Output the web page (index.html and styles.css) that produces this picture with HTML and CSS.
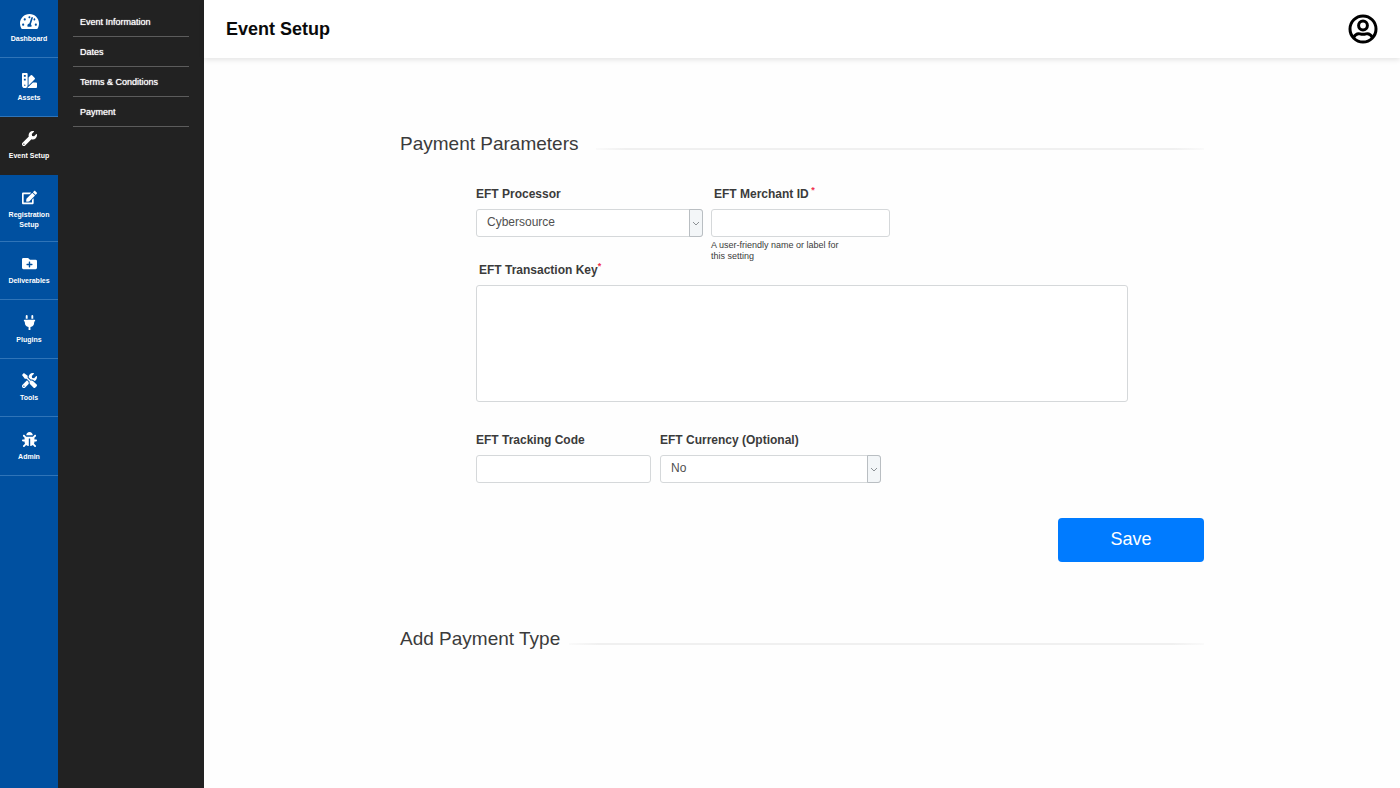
FILE: index.html
```html
<!DOCTYPE html>
<html lang="en">
<head>
    <meta charset="utf-8">
    <title>Event Setup</title>
    <meta name="viewport" content="width=device-width, initial-scale=1.0">
    <link rel="stylesheet" href="styles.css">
</head>
<body>
    <div class="app">
        <!-- Main navigation -->
        <nav class="rail">
            <a class="rail-item" href="#">
                <svg class="icon icon-wide" viewBox="0 32 576 448"><path d="M288 32C128.94 32 0 160.94 0 320c0 52.8 14.25 102.26 39.06 144.8 5.61 9.62 16.3 15.2 27.44 15.2h443c11.14 0 21.83-5.58 27.44-15.2C561.75 422.26 576 372.8 576 320c0-159.06-128.94-288-288-288zm0 64c14.71 0 26.58 10.13 30.32 23.65-1.11 2.26-2.64 4.23-3.45 6.67l-9.22 27.67c-5.13 3.49-10.97 6.01-17.64 6.01-17.67 0-32-14.33-32-32S270.33 96 288 96zM96 384c-17.67 0-32-14.33-32-32s14.33-32 32-32 32 14.33 32 32-14.33 32-32 32zm48-160c-17.67 0-32-14.33-32-32s14.33-32 32-32 32 14.33 32 32-14.33 32-32 32zm246.77-72.41l-61.33 184C343.13 347.33 352 364.54 352 384c0 11.72-3.38 22.55-8.88 32H232.88c-5.5-9.45-8.88-20.28-8.88-32 0-33.94 26.5-61.43 59.9-63.59l61.34-184.01c4.17-12.56 17.73-19.45 30.36-15.17 12.57 4.19 19.35 17.79 15.17 30.36zm14.66 57.2l15.52-46.55c3.47-1.29 7.13-2.23 11.05-2.23 17.67 0 32 14.33 32 32s-14.33 32-32 32c-11.38-.01-20.89-6.28-26.57-15.22zM480 384c-17.67 0-32-14.33-32-32s14.33-32 32-32 32 14.33 32 32-14.33 32-32 32z"/></svg>
                <span>Dashboard</span>
            </a>
            <a class="rail-item" href="#">
                <svg class="icon" viewBox="0 0 512 512"><path d="M434.66 167.71L344.5 77.36a31.83 31.83 0 0 0-45-.07l-.07.07L224 152.88V424l210.66-211.1a32 32 0 0 0 0-45.19zM480 320H373.09L186.68 506.51c-2.06 2.07-4.5 3.58-6.68 5.49h300a32 32 0 0 0 32-32V352a32 32 0 0 0-32-32zM192 32a32 32 0 0 0-32-32H32A32 32 0 0 0 0 32v384a96 96 0 0 0 192 0zM96 440a24 24 0 1 1 24-24 24 24 0 0 1-24 24zm32-184H64v-64h64zm0-128H64V64h64z"/></svg>
                <span>Assets</span>
            </a>
            <a class="rail-item active" href="#">
                <svg class="icon" viewBox="0 0 512 512"><path d="M507.73 109.1c-2.24-9.03-13.54-12.09-20.12-5.51l-74.36 74.36-67.88-11.31-11.31-67.88 74.36-74.36c6.62-6.62 3.43-17.9-5.66-20.16-47.38-11.74-99.55.91-136.58 37.93-39.64 39.64-50.55 97.1-34.05 147.2L18.74 402.76c-24.99 24.99-24.99 65.51 0 90.5 24.99 24.99 65.51 24.99 90.5 0l213.21-213.21c50.12 16.71 107.47 5.68 147.37-34.22 37.07-37.07 49.7-89.32 37.91-136.73zM64 472c-13.25 0-24-10.75-24-24 0-13.26 10.75-24 24-24s24 10.74 24 24c0 13.25-10.75 24-24 24z"/></svg>
                <span>Event Setup</span>
            </a>
            <a class="rail-item" href="#">
                <svg class="icon" viewBox="0 0 576 512"><path d="M402.6 83.2l90.2 90.2c3.8 3.8 3.8 10 0 13.8L274.4 405.6l-92.8 10.3c-12.4 1.4-22.9-9.1-21.5-21.5l10.3-92.8L388.8 83.2c3.8-3.8 10-3.8 13.8 0zm162-22.9l-48.8-48.8c-15.2-15.2-39.9-15.2-55.2 0l-35.4 35.4c-3.8 3.8-3.8 10 0 13.8l90.2 90.2c3.8 3.8 10 3.8 13.8 0l35.4-35.4c15.2-15.3 15.2-40 0-55.2zM384 346.2V448H64V128h229.8c3.2 0 6.2-1.3 8.5-3.5l40-40c7.6-7.6 2.2-20.5-8.5-20.5H48C21.5 64 0 85.5 0 112v352c0 26.5 21.5 48 48 48h352c26.5 0 48-21.5 48-48V306.2c0-10.7-12.9-16-20.5-8.5l-40 40c-2.2 2.3-3.5 5.3-3.5 8.5z"/></svg>
                <span>Registration Setup</span>
            </a>
            <a class="rail-item" href="#">
                <svg class="icon" viewBox="0 0 512 512"><path d="M464 128H272l-64-64H48a48 48 0 0 0-48 48v288a48 48 0 0 0 48 48h416a48 48 0 0 0 48-48V176a48 48 0 0 0-48-48zM359.5 296a16 16 0 0 1-16 16h-64v64a16 16 0 0 1-16 16h-16a16 16 0 0 1-16-16v-64h-64a16 16 0 0 1-16-16v-16a16 16 0 0 1 16-16h64v-64a16 16 0 0 1 16-16h16a16 16 0 0 1 16 16v64h64a16 16 0 0 1 16 16z"/></svg>
                <span>Deliverables</span>
            </a>
            <a class="rail-item" href="#">
                <svg class="icon" viewBox="0 0 384 512"><path d="M320 32a32 32 0 0 0-64 0v96h64zm48 128H16a16 16 0 0 0-16 16v32a16 16 0 0 0 16 16h16v32a160.07 160.07 0 0 0 128 156.8V512h64v-99.2A160.07 160.07 0 0 0 352 256v-32h16a16 16 0 0 0 16-16v-32a16 16 0 0 0-16-16zM128 32a32 32 0 0 0-64 0v96h64z"/></svg>
                <span>Plugins</span>
            </a>
            <a class="rail-item" href="#">
                <svg class="icon" viewBox="0 0 512 512"><path d="M501.1 395.7L384 278.6c-23.1-23.1-57.6-27.6-85.4-13.9L192 158.1V96L64 0 0 64l96 128h62.1l106.6 106.6c-13.6 27.8-9.2 62.3 13.9 85.4l117.1 117.1c14.6 14.6 38.2 14.6 52.7 0l52.7-52.7c14.5-14.6 14.5-38.2 0-52.7zM331.7 225c28.3 0 54.9 11 74.9 31l19.4 19.4c15.8-6.9 30.8-16.5 43.8-29.5 37.1-37.1 49.7-89.3 37.9-136.7-2.2-9-13.5-12.1-20.1-5.5l-74.4 74.4-67.9-11.3L334 98.9l74.4-74.4c6.6-6.6 3.4-17.9-5.7-20.2-47.4-11.7-99.6.9-136.6 37.9-28.5 28.5-41.9 66.1-41.2 103.6l82.1 82.1c8.1-1.9 16.5-2.9 24.7-2.9zm-103.9 82l-56.7-56.7L18.7 402.8c-25 25-25 65.5 0 90.5s65.5 25 90.5 0l123.6-123.6c-7.6-19.9-9.9-41.6-5-62.7zM64 472c-13.2 0-24-10.8-24-24 0-13.3 10.7-24 24-24s24 10.7 24 24c0 13.2-10.7 24-24 24z"/></svg>
                <span>Tools</span>
            </a>
            <a class="rail-item" href="#">
                <svg class="icon" viewBox="0 0 512 512"><path d="M511.988 288.9c-.478 17.43-15.217 31.1-32.653 31.1H424v16c0 21.864-4.882 42.584-13.6 61.145l60.228 60.228c12.496 12.497 12.496 32.758 0 45.255-12.498 12.497-32.759 12.496-45.256 0l-54.736-54.736C345.886 467.965 314.351 480 280 480V236c0-6.627-5.373-12-12-12h-24c-6.627 0-12 5.373-12 12v244c-34.351 0-65.886-12.035-90.636-32.108l-54.736 54.736c-12.498 12.497-32.759 12.496-45.256 0-12.496-12.497-12.496-32.758 0-45.255l60.228-60.228C92.882 378.584 88 357.864 88 336v-16H32.666C15.23 320 .491 306.33.013 288.9-.484 270.816 14.028 256 32 256h56v-58.745l-46.628-46.628c-12.496-12.497-12.496-32.758 0-45.255 12.498-12.497 32.758-12.497 45.256 0L141.255 160h229.489l54.627-54.627c12.498-12.497 32.758-12.497 45.256 0 12.496 12.497 12.496 32.758 0 45.255L424 197.255V256h56c17.972 0 32.484 14.816 31.988 32.9zM257 0c-61.856 0-112 50.144-112 112h224C369 50.144 318.856 0 257 0z"/></svg>
                <span>Admin</span>
            </a>
        </nav>

        <!-- Event setup pages -->
        <nav class="submenu">
            <a href="#">Event Information</a>
            <a href="#">Dates</a>
            <a href="#">Terms &amp; Conditions</a>
            <a href="#">Payment</a>
        </nav>

        <div class="page">
            <header class="topbar">
                <h1>Event Setup</h1>
                <button class="account" type="button" aria-label="Account">
                    <svg viewBox="0 0 30 30" fill="none" stroke="currentColor" stroke-width="3">
                        <circle cx="15" cy="15" r="13"/>
                        <circle cx="15" cy="11.5" r="4.4"/>
                        <path d="M5.5 23.5C7.5 20 10 19.3 12 19.9q3 .9 6 0c2-.6 4.500.1 6.500 3.600"/>
                    </svg>
                </button>
            </header>

            <main class="content">
                <section class="section">
                    <div class="section-title">
                        <h2>Payment Parameters</h2>
                    </div>

                    <form>
                        <div class="fields">
                            <div class="row">
                                <div class="field field-processor">
                                    <label for="processor">EFT Processor</label>
                                    <div class="select">
                                        <select id="processor">
                                            <option>Cybersource</option>
                                        </select>
                                        <span class="arrow"><svg viewBox="0 0 8 5"><path d="M1 1l3 3 3-3"/></svg></span>
                                    </div>
                                </div>
                                <div class="field field-merchant">
                                    <label class="required" for="merchant">EFT Merchant ID<sup> *</sup></label>
                                    <input type="text" id="merchant">
                                    <p class="hint">A user-friendly name or label for this setting</p>
                                </div>
                            </div>

                            <div class="field field-key">
                                <label class="required" for="key">EFT Transaction Key<sup>*</sup></label>
                                <textarea id="key"></textarea>
                            </div>

                            <div class="row row-wide">
                                <div class="field field-tracking">
                                    <label for="tracking">EFT Tracking Code</label>
                                    <input type="text" id="tracking">
                                </div>
                                <div class="field field-currency">
                                    <label for="currency">EFT Currency (Optional)</label>
                                    <div class="select">
                                        <select id="currency">
                                            <option>No</option>
                                        </select>
                                        <span class="arrow"><svg viewBox="0 0 8 5"><path d="M1 1l3 3 3-3"/></svg></span>
                                    </div>
                                </div>
                            </div>
                        </div>

                        <div class="actions">
                            <button class="save" type="submit">Save</button>
                        </div>
                    </form>
                </section>

                <section class="section">
                    <div class="section-title">
                        <h2>Add Payment Type</h2>
                    </div>
                </section>
            </main>
        </div>
    </div>
</body>
</html>
```

FILE: styles.css
```css
:root {
    --blue: #0050a0;
    --dark: #222222;
    --primary: #007bff;
    --text: #3b3b3b;
    --border: #d5d8da;
    --required: #f0304c;
}

* {
    box-sizing: border-box;
    margin: 0;
    padding: 0;
}

body {
    font-family: "Liberation Sans", Arial, sans-serif;
    background-color: #fefefe;
    color: var(--text);
}

a {
    color: #fff;
    text-decoration: none;
}

.app {
    display: flex;
    min-height: 100vh;
}

/* Main navigation */
.rail {
    flex: none;
    width: 58px;
    background-color: var(--blue);
}

.rail-item {
    display: flex;
    flex-direction: column;
    align-items: center;
    gap: 5px;
    min-height: 58px;
    padding: 14px 4px 11px;
    border-bottom: 1px solid #2f74b8;
    font-size: 7px;
    font-weight: bold;
    line-height: 10px;
    text-align: center;
}

.rail-item:nth-child(even) {
    min-height: 59px;
    padding-top: 15px;
}

.rail-item.active {
    background-color: var(--dark);
    border-bottom-color: var(--dark);
}

.icon {
    width: 15px;
    height: 15px;
    fill: #fff;
}

.icon-wide {
    width: 19px;
}

/* Submenu */
.submenu {
    flex: none;
    width: 146px;
    padding: 7px 15px;
    background-color: var(--dark);
}

.submenu a {
    display: block;
    height: 30px;
    padding: 0 7px;
    border-bottom: 1px solid #5c5c5c;
    font-size: 9px;
    line-height: 30px;
    text-shadow: 0 0 1px #fff;
}

/* Page */
.page {
    flex: 1;
    min-width: 0;
}

.topbar {
    display: flex;
    align-items: center;
    justify-content: space-between;
    height: 58px;
    padding: 0 22px;
    background-color: #fff;
    box-shadow: 0 2px 5px rgba(0, 0, 0, 0.1);
}

h1 {
    font-size: 18px;
    color: #0a0a0a;
}

.account {
    width: 30px;
    height: 30px;
    border: none;
    background: none;
    color: #000;
    cursor: pointer;
}

.account svg {
    display: block;
}

.content {
    max-width: 804px;
    margin: 0 auto;
    padding: 74px 0 40px;
}

.section + .section {
    margin-top: 65px;
}

.section-title {
    display: flex;
    align-items: center;
    gap: 18px;
}

.section + .section .section-title {
    gap: 9px;
}

.section-title::after {
    content: "";
    flex: 1;
    height: 2px;
    margin-top: 10px;
    background: linear-gradient(90deg, #fafafa, #f0f0f0 30px, #f0f0f0 95%, #fafafa);
}

h2 {
    font-size: 19px;
    font-weight: normal;
    line-height: 24px;
}

/* Form */
.fields {
    padding: 30px 76px 0;
}

.row {
    display: flex;
    gap: 8px;
}

.row-wide {
    gap: 9px;
    margin-top: 30px;
}

.field-processor {
    width: 227px;
}

.field-merchant {
    width: 179px;
}

.field-tracking {
    width: 175px;
}

.field-currency {
    width: 221px;
}

label {
    display: block;
    height: 23px;
    font-size: 12px;
    font-weight: bold;
    line-height: 16px;
}

label.required {
    padding-left: 3px;
}

sup {
    color: var(--required);
    font-size: 9px;
    line-height: 0;
}

input,
select,
textarea {
    display: block;
    width: 100%;
    height: 28px;
    padding: 0 10px;
    border: 1px solid var(--border);
    border-radius: 3px;
    background-color: #fff;
    color: #505050;
    font-family: inherit;
    font-size: 12px;
}

select {
    appearance: none;
    padding-bottom: 2px;
}

textarea {
    height: 117px;
    padding: 8px 10px;
    resize: none;
}

input:focus,
select:focus,
textarea:focus {
    outline: none;
    border-color: var(--primary);
}

.select {
    position: relative;
}

.arrow {
    position: absolute;
    top: 0;
    right: 0;
    bottom: 0;
    display: flex;
    align-items: center;
    justify-content: center;
    width: 14px;
    border: 1px solid #b9bec2;
    border-radius: 0 3px 3px 0;
    background-color: #f3f6f8;
    pointer-events: none;
}

.arrow svg {
    width: 8px;
    height: 5px;
    fill: none;
    stroke: #8d9296;
}

.hint {
    max-width: 140px;
    margin-top: 3px;
    font-size: 9px;
    line-height: 11px;
}

.actions {
    display: flex;
    justify-content: flex-end;
    margin-top: 35px;
}

.save {
    width: 146px;
    height: 44px;
    padding-bottom: 2px;
    border: none;
    border-radius: 4px;
    background-color: var(--primary);
    color: #fff;
    font-family: inherit;
    font-size: 18px;
    cursor: pointer;
}
```
